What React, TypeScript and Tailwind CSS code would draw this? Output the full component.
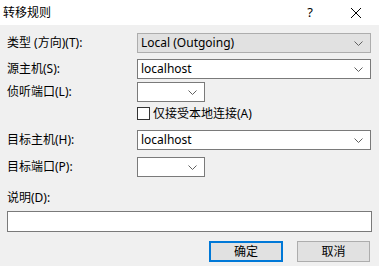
import React from 'react';

const font = { fontFamily: '"Noto Sans", "Noto Sans CJK SC", sans-serif' };

const Chevron = () => (
    <svg width="9" height="5" viewBox="0 0 9 5" className="shrink-0">
        <path d="M0.5 0.5 L4.5 4.5 L8.5 0.5" fill="none" stroke="#606060" strokeWidth="1" />
    </svg>
);

const Combo = ({ value, width, disabled }: { value?: string; width: string; disabled?: boolean }) => (
    <div
        className={`flex h-[20px] items-center justify-between border pr-[7px] pl-[3px] ${width} ${
            disabled ? 'border-[#adadad] bg-[#e1e1e1]' : 'border-[#7a7a7a] bg-white'
        }`}
    >
        <span className="text-[12px] leading-none text-black">{value}</span>
        <Chevron />
    </div>
);

const Row = ({ label, children, className }: { label: string; children: React.ReactNode; className?: string }) => (
    <div className={`flex items-center ${className ?? ''}`}>
        <span className="w-[130px] text-[12px] leading-none text-black">{label}</span>
        {children}
    </div>
);

export default function App() {
    return (
        <div className="flex h-[266px] w-[379px] flex-col bg-[#f0f0f0] select-none" style={font}>
            {/* Title bar */}
            <div className="flex h-[25px] items-center bg-white pl-[3px]">
                <span className="text-[12px] text-black">转移规则</span>
                <span className="ml-auto text-[13px] text-black">?</span>
                <svg width="10" height="10" viewBox="0 0 10 10" className="mr-[18px] ml-[38px]">
                    <path d="M0 0 L10 10 M10 0 L0 10" stroke="#000" strokeWidth="1" />
                </svg>
            </div>

            <div className="flex flex-col pr-[8px] pl-[7px]">
                <Row label="类型 (方向)(T):" className="mt-[8px]">
                    <Combo value="Local (Outgoing)" width="w-[234px]" disabled />
                </Row>
                <Row label="源主机(S):" className="mt-[6px]">
                    <Combo value="localhost" width="w-[234px]" />
                </Row>
                <Row label="侦听端口(L):" className="mt-[3px]">
                    <Combo width="w-[68px]" />
                </Row>
                <div className="mt-[5px] flex items-center pl-[130px]">
                    <div className="h-[13px] w-[13px] border border-[#333] bg-white" />
                    <span className="ml-[3px] text-[12px] leading-none text-black">仅接受本地连接(A)</span>
                </div>
                <Row label="目标主机(H):" className="mt-[10px]">
                    <Combo value="localhost" width="w-[234px]" />
                </Row>
                <Row label="目标端口(P):" className="mt-[7px]">
                    <Combo width="w-[68px]" />
                </Row>
                <span className="mt-[15px] text-[12px] leading-none text-black">说明(D):</span>
                <div className="mt-[7px] h-[21px] w-[365px] border border-[#7a7a7a] bg-white" />
                <div className="mt-[9px] flex justify-end gap-[14px] pr-[1px]">
                    <button className="flex h-[21px] w-[74px] items-center justify-center border-2 border-[#0078d7] bg-[#e1e1e1] text-[12px] text-black">
                        确定
                    </button>
                    <button className="flex h-[21px] w-[73px] items-center justify-center border border-[#adadad] bg-[#e1e1e1] text-[12px] text-black">
                        取消
                    </button>
                </div>
            </div>
        </div>
    );
}
